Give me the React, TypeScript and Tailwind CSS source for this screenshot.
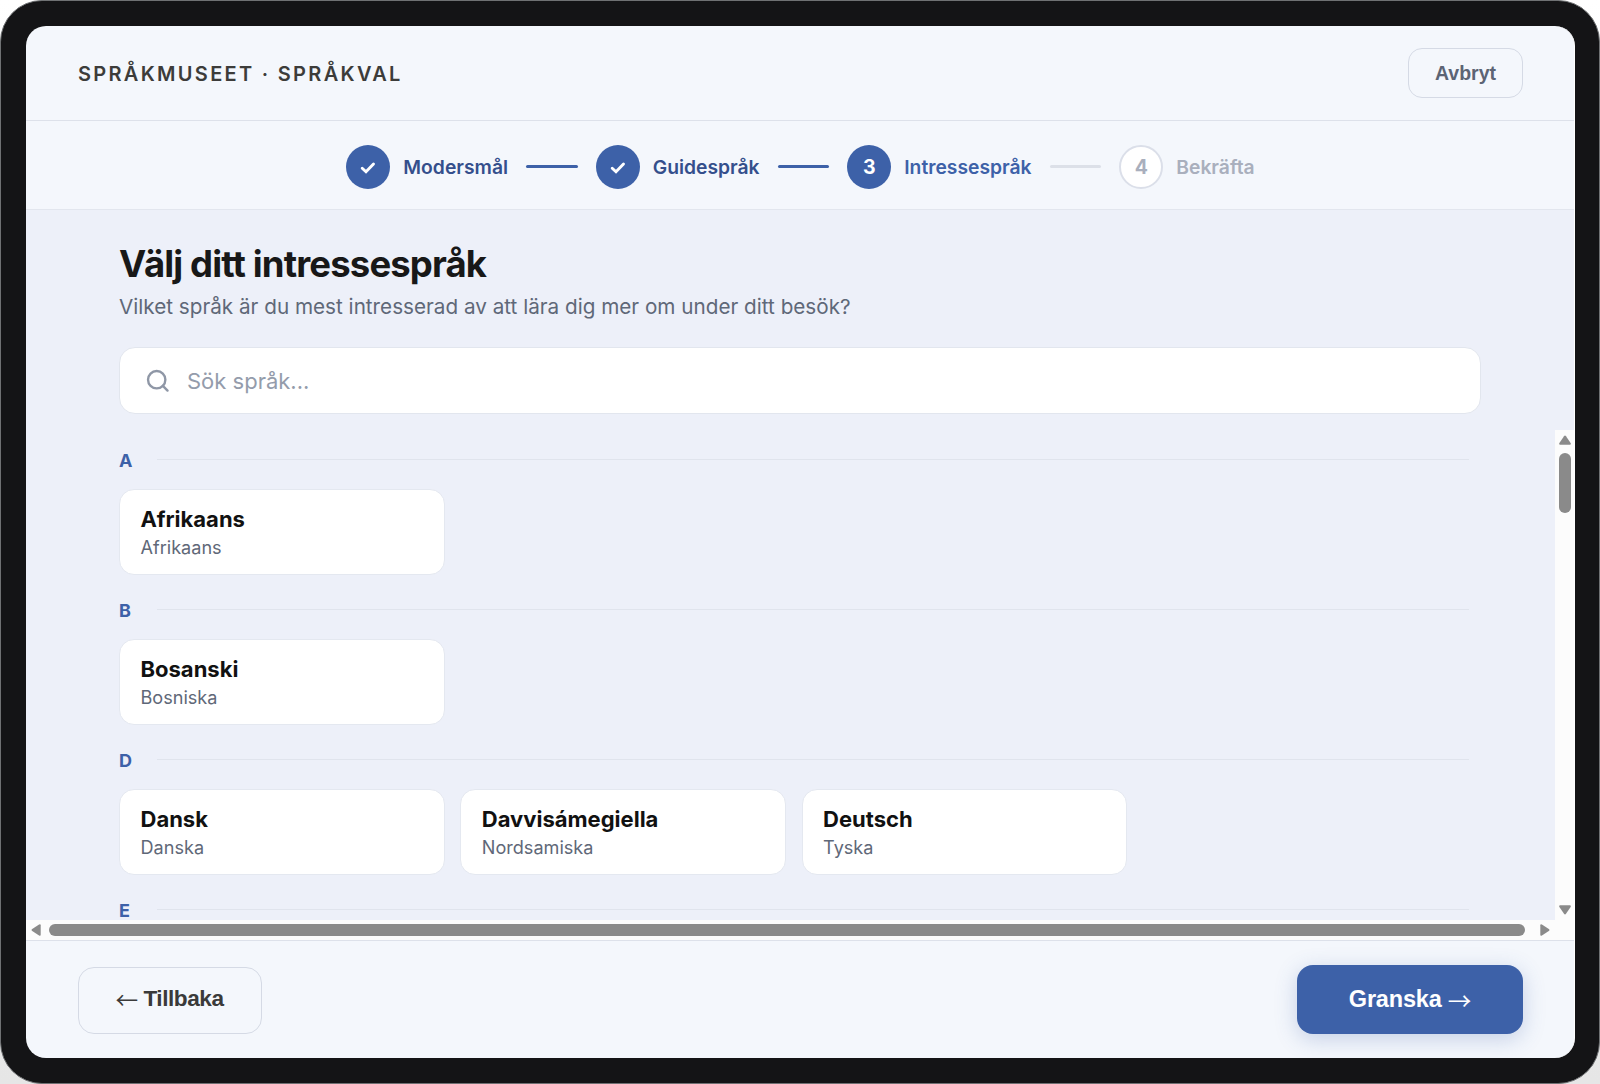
import React, { useState } from 'react';

const steps = [
  { id: 1, label: 'Modersmål', state: 'done' },
  { id: 2, label: 'Guidespråk', state: 'done' },
  { id: 3, label: 'Intressespråk', state: 'current' },
  { id: 4, label: 'Bekräfta', state: 'upcoming' },
];

const groups = [
  { letter: 'A', languages: [{ name: 'Afrikaans', swedish: 'Afrikaans' }] },
  { letter: 'B', languages: [{ name: 'Bosanski', swedish: 'Bosniska' }] },
  {
    letter: 'D',
    languages: [
      { name: 'Dansk', swedish: 'Danska' },
      { name: 'Davvisámegiella', swedish: 'Nordsamiska' },
      { name: 'Deutsch', swedish: 'Tyska' },
    ],
  },
  { letter: 'E', languages: [] },
];

const labelColors: Record<string, string> = {
  done: 'text-[#344f8c]',
  current: 'text-[#3d61a8]',
  upcoming: 'text-[#a9afbd]',
};

const Stepper = () => (
  <div className="flex h-[89px] shrink-0 items-center justify-center border-b border-[#e2e6ee] pt-[3px] pl-px">
    {steps.map((step, i) => (
      <React.Fragment key={step.id}>
        {i > 0 && (
          <div
            className={`mx-[18px] h-[3px] w-[51.7px] rounded-full ${
              step.state === 'upcoming' ? 'bg-[#dce0e8]' : 'bg-[#3d61a8]'
            }`}
          />
        )}
        <div className="flex items-center gap-[13px]">
          <div
            className={`flex size-11 items-center justify-center rounded-full text-[19.5px] font-bold ${
              step.state === 'upcoming'
                ? 'border-[2.5px] border-[#dbdfe9] bg-white text-[#a9afbd]'
                : 'bg-[#3d61a8] text-white'
            }`}
          >
            {step.state === 'done' ? (
              <svg className="size-[18px]" viewBox="0 0 18 18" fill="none" stroke="currentColor" aria-hidden="true">
                <path strokeLinecap="round" strokeWidth={2.9} d="M3.200 10.200L7 13.700L14.500 6" />
              </svg>
            ) : (
              <span className="pt-[2px]">{step.id}</span>
            )}
          </div>
          <span className={`pt-[2px] text-[19.3px] font-semibold ${labelColors[step.state]}`}>{step.label}</span>
        </div>
      </React.Fragment>
    ))}
  </div>
);

const LanguageGroup = ({ letter, languages }: (typeof groups)[number]) => (
  <section className="h-[150px]">
    <div className="flex h-[21px] items-center">
      <h2 className="w-[38px] pt-px text-[18px] font-bold text-[#3d61a8]">{letter}</h2>
      <div className="h-px flex-1 bg-[#e0e4ed]" />
    </div>
    <div className="mt-[19px] grid grid-cols-[repeat(4,325.5px)] gap-[15.8px]">
      {languages.map((lang) => (
        <button
          key={lang.name}
          className="flex h-[86px] flex-col items-start rounded-[15px] border border-[#e4e8f0] bg-white px-[20.5px] pt-[14px] text-left"
        >
          <span className="text-[22px] leading-[30px] font-[650] text-[#111111]">{lang.name}</span>
          <span className="text-[18.1px] leading-[26px] text-[#5f6878]">{lang.swedish}</span>
        </button>
      ))}
    </div>
  </section>
);

const App = () => {
  const [query, setQuery] = useState('');

  return (
    <div className="h-[1084px] w-[1600px] overflow-hidden bg-linear-to-b from-white to-[#e6e6e6] font-['Inter',sans-serif]">
      <div className="h-full rounded-[42px] border border-[#6f7173] bg-[#141416] p-[25px]">
        <div className="flex h-[1032px] w-[1549px] flex-col overflow-hidden rounded-[20px] border-r border-white bg-[#f4f7fc]">
          <header className="flex h-[95px] shrink-0 items-center justify-between border-b border-[#dde1ea] pr-[51px] pl-[52px]">
            <h3 className="pt-px text-[20px] font-semibold tracking-[2.3px] text-[#3c3c3a]">SPRÅKMUSEET · SPRÅKVAL</h3>
            <button className="h-[50px] w-[115px] rounded-[14px] border border-[#d5dae5] pt-px font-['Liberation_Sans',sans-serif] text-[19.5px] font-bold text-[#5c6474]">
              Avbryt
            </button>
          </header>

          <Stepper />

          <main className="flex h-[730px] shrink-0 flex-col bg-[#edf0f9]">
            <div className="h-[220px] shrink-0 pt-[32px] pr-[93px] pl-[93px]">
              <h1 className="text-[36.5px] leading-[44px] font-bold tracking-[-0.86px] text-[#181818]">
                Välj ditt intressespråk
              </h1>
              <p className="mt-[7px] text-[20.7px] leading-[28px] text-[#5f6878]">
                Vilket språk är du mest intresserad av att lära dig mer om under ditt besök?
              </p>
              <div className="mt-[26px] flex h-[67px] items-center rounded-[16px] border border-[#e2e6ee] bg-white pl-[25px]">
                <svg className="size-[26px] text-[#8f97a6]" viewBox="0 0 24 24" fill="none" stroke="currentColor" aria-hidden="true">
                  <circle cx="10.800" cy="10.800" r="8" strokeWidth={2.200} />
                  <path strokeLinecap="round" strokeWidth={2.200} d="M20.800 20.800l-4.300-4.300" />
                </svg>
                <input
                  value={query}
                  onChange={(e) => setQuery(e.target.value)}
                  placeholder="Sök språk..."
                  className="ml-[16px] flex-1 pt-px text-[22px] outline-none placeholder:text-[#949cab]"
                />
              </div>
            </div>

            <div className="flex h-[490px] shrink-0">
              <div className="w-[1529px] overflow-hidden pt-[19px] pr-[86px] pl-[93px]">
                {groups.map((group) => (
                  <LanguageGroup key={group.letter} {...group} />
                ))}
              </div>
              <div className="flex w-[19px] flex-col items-center bg-[#fcfcfc]">
                <svg className="mt-[5px] h-[10px] w-[12px] fill-[#8a8a8a]" viewBox="0 0 12 10" aria-hidden="true">
                  <path d="M5 1.200q1-1.400 2 0l4.600 6.900q.8 1.600-.9 1.600H1.300q-1.700 0-.9-1.600z" />
                </svg>
                <div className="mt-[8px] h-[60px] w-3 rounded-full bg-[#8a8a8a]" />
                <svg className="mt-auto mb-[5px] h-[10px] w-[12px] fill-[#8a8a8a]" viewBox="0 0 12 10" aria-hidden="true">
                  <path d="M5 8.800q1 1.400 2 0l4.600-6.900q.8-1.600-.9-1.600H1.300q-1.700 0-.9 1.600z" />
                </svg>
              </div>
            </div>

            <div className="flex h-[20px] shrink-0 items-center bg-[#fcfcfc] pl-[5px]">
              <svg className="h-[12px] w-[10px] fill-[#8a8a8a]" viewBox="0 0 10 12" aria-hidden="true">
                <path d="M1.200 5q-1.400 1 0 2l6.900 4.600q1.600.8 1.600-.9V1.300q0-1.700-1.600-.9z" />
              </svg>
              <div className="ml-[8px] h-3 w-[1476px] rounded-full bg-[#8a8a8a]" />
              <svg className="ml-[15px] h-[12px] w-[10px] fill-[#8a8a8a]" viewBox="0 0 10 12" aria-hidden="true">
                <path d="M8.800 5q1.400 1 0 2l-6.900 4.600q-1.600.8-1.600-.9V1.300q0-1.700 1.600-.9z" />
              </svg>
            </div>
          </main>

          <footer className="flex flex-1 items-center justify-between border-t border-[#dde1ea] pr-[51px] pl-[52px] font-['Liberation_Sans',sans-serif] font-bold">
            <button className="mt-px flex h-[67px] w-[184px] items-center justify-center rounded-[16px] border border-[#d5dae5] pr-px pb-[2px] text-[22.6px] tracking-[-0.45px] whitespace-pre text-[#3a3a3a]">
              <span className="pt-[3px] font-['Noto_Sans_CJK_JP',sans-serif] leading-none font-normal">←</span> Tillbaka
            </button>
            <button className="flex h-[69px] w-[226px] items-center justify-center rounded-[16px] bg-[#3d61a8] text-[23.5px] tracking-[-0.2px] whitespace-pre text-white shadow-[0_5px_21px_rgba(61,97,168,0.25)]">
              Granska <span className="pt-[3px] font-['Noto_Sans_CJK_JP',sans-serif] leading-none font-normal">→</span>
            </button>
          </footer>
        </div>
      </div>
    </div>
  );
};

export default App;
